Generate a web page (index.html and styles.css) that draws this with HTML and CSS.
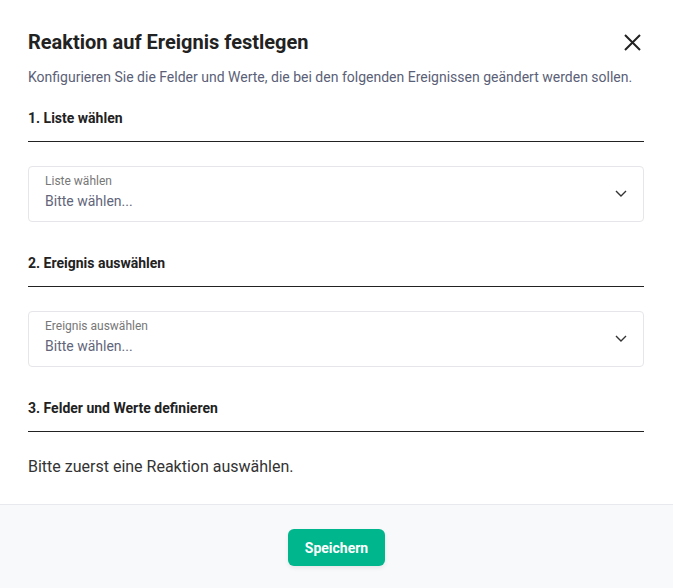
FILE: index.html
```html
<!DOCTYPE html>
<html lang="de">
<head>
    <meta charset="UTF-8">
    <meta name="viewport" content="width=device-width, initial-scale=1.0">
    <title>Reaktion auf Ereignis festlegen</title>
    <link rel="stylesheet" href="styles.css">
</head>
<body>
    <div class="modal">
        <div class="modal-body">
            <div class="modal-header">
                <h2 class="modal-title">Reaktion auf Ereignis festlegen</h2>
                <button class="close-btn" aria-label="Schließen">
                    <svg width="17" height="17" viewBox="0 0 17 17">
                        <path d="M1 1 L16 16 M16 1 L1 16" stroke="#222" stroke-width="2" fill="none"/>
                    </svg>
                </button>
            </div>
            <p class="subtitle">Konfigurieren Sie die Felder und Werte, die bei den folgenden Ereignissen geändert werden sollen.</p>

            <!-- Schritt 1 -->
            <h3 class="step-title">1. Liste wählen</h3>
            <div class="select-box">
                <div class="select-text">
                    <span class="select-label">Liste wählen</span>
                    <span class="select-value">Bitte wählen...</span>
                </div>
                <svg class="chevron" width="12" height="7" viewBox="0 0 12 7">
                    <path d="M1 1 L6 6 L11 1" stroke="#333" stroke-width="1.4" fill="none"/>
                </svg>
            </div>

            <!-- Schritt 2 -->
            <h3 class="step-title">2. Ereignis auswählen</h3>
            <div class="select-box">
                <div class="select-text">
                    <span class="select-label">Ereignis auswählen</span>
                    <span class="select-value">Bitte wählen...</span>
                </div>
                <svg class="chevron" width="12" height="7" viewBox="0 0 12 7">
                    <path d="M1 1 L6 6 L11 1" stroke="#333" stroke-width="1.4" fill="none"/>
                </svg>
            </div>

            <!-- Schritt 3 -->
            <h3 class="step-title">3. Felder und Werte definieren</h3>
            <p class="hint">Bitte zuerst eine Reaktion auswählen.</p>
        </div>

        <div class="modal-footer">
            <button class="save-btn">Speichern</button>
        </div>
    </div>
</body>
</html>
```

FILE: styles.css
```css
* {
    margin: 0;
    padding: 0;
    box-sizing: border-box;
}

body {
    background-color: #fff;
    font-family: Roboto, "Liberation Sans", sans-serif;
    color: #222;
}

.modal {
    width: 673px;
    min-height: 588px;
    display: flex;
    flex-direction: column;
}

.modal-body {
    padding: 30px 29px 25px 28px;
}

/* Header */
.modal-header {
    display: flex;
    justify-content: space-between;
    align-items: center;
}

.modal-title {
    font-size: 20px;
    line-height: 24px;
    font-weight: 700;
    color: #222;
}

.close-btn {
    background: none;
    border: none;
    cursor: pointer;
    width: 17px;
    height: 17px;
    margin-right: 3px;
    display: flex;
}

.subtitle {
    margin-top: 13px;
    font-size: 14px;
    line-height: 20px;
    color: #5b5f77;
}

/* Steps */
.step-title {
    margin-top: 21px;
    padding-bottom: 13px;
    border-bottom: 1px solid #222;
    font-size: 14px;
    line-height: 20px;
    font-weight: 700;
    color: #222;
}

.select-box + .step-title {
    margin-top: 31px;
}

.select-box {
    margin-top: 24px;
    height: 56px;
    border: 1px solid #e6e6ea;
    border-radius: 4px;
    padding: 6px 16px 10px 16px;
    display: flex;
    align-items: center;
    justify-content: space-between;
    cursor: pointer;
}

.select-text {
    display: flex;
    flex-direction: column;
    gap: 2px;
}

.select-label {
    font-size: 12px;
    line-height: 16px;
    color: #777;
}

.select-value {
    font-size: 14px;
    line-height: 20px;
    color: #62657a;
}

.chevron {
    margin-top: 2px;
}

.hint {
    margin-top: 23px;
    font-size: 16px;
    line-height: 24px;
    color: #333;
}

/* Footer */
.modal-footer {
    flex: 1;
    background-color: #f8f9fb;
    border-top: 1px solid #e8e9ee;
    display: flex;
    justify-content: center;
    padding-top: 24px;
}

.save-btn {
    align-self: flex-start;
    width: 97px;
    height: 37px;
    background-color: #00b68c;
    color: #fff;
    border: none;
    border-radius: 6px;
    font-family: Roboto, "Liberation Sans", sans-serif;
    font-size: 14px;
    font-weight: 700;
    cursor: pointer;
    box-shadow: 0 2px 4px rgba(0, 0, 0, 0.08);
}
```
